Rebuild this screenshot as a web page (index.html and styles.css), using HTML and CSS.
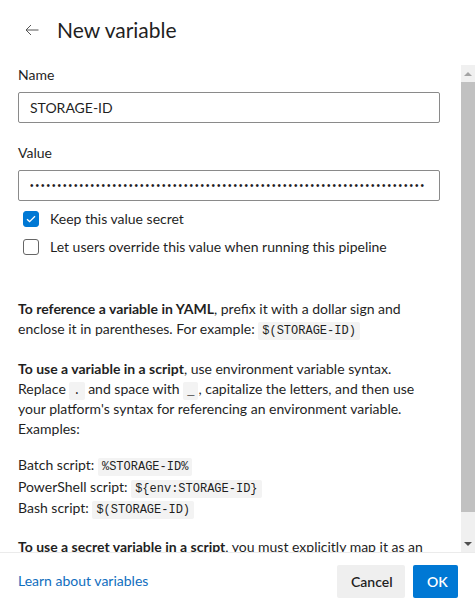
FILE: index.html
```html
<!DOCTYPE html>
<html lang="en">
<head>
<meta charset="utf-8">
<title>New variable</title>
<link rel="stylesheet" href="styles.css">
</head>
<body>
<div class="panel">
  <header class="header">
    <button class="back" aria-label="Back">
      <svg width="14" height="12" viewBox="0 0 14 12"><path d="M13.5 6H1 M6 1L1 6L6 11" fill="none" stroke="#555" stroke-width="1"/></svg>
    </button>
    <h1 class="title">New variable</h1>
  </header>
  <div class="body">
    <div class="content">
      <label class="label">Name</label>
      <input class="input" type="text" value="STORAGE-ID">
      <label class="label label-value">Value</label>
      <input class="input input-secret" type="text" value="••••••••••••••••••••••••••••••••••••••••••••••••••••••••••••••••••••••••">
      <div class="checks">
        <div class="check-row">
          <span class="box box-on"><svg width="10" height="8" viewBox="0 0 10 8"><path d="M1 4.2L3.6 6.6L9 1.2" fill="none" stroke="#fff" stroke-width="1.3"/></svg></span>
          <span>Keep this value secret</span>
        </div>
        <div class="check-row">
          <span class="box"></span>
          <span>Let users override this value when running this pipeline</span>
        </div>
      </div>
      <p class="para para-first"><b>To reference a variable in YAML</b>, prefix it with a dollar sign and enclose it in parentheses. For example: <code>$(STORAGE-ID)</code></p>
      <p class="para"><b>To use a variable in a script</b>, use environment variable syntax. Replace <code>.</code> and space with <code>_</code>, capitalize the letters, and then use your platform's syntax for referencing an environment variable. Examples:</p>
      <div class="examples">
        <div class="ex">Batch script: <code>%STORAGE-ID%</code></div>
        <div class="ex">PowerShell script: <code>${env:STORAGE-ID}</code></div>
        <div class="ex">Bash script: <code>$(STORAGE-ID)</code></div>
      </div>
      <p class="para para-secret"><b>To use a secret variable in a script</b>, you must explicitly map it as an environment variable, and then reference the environment variable.</p>
    </div>
    <div class="scrollbar">
      <div class="sb-btn"><span class="tri tri-up"></span></div>
      <div class="sb-thumb"></div>
      <div class="sb-track"></div>
      <div class="sb-btn"><span class="tri tri-down"></span></div>
    </div>
  </div>
  <footer class="footer">
    <a class="link" href="#">Learn about variables</a>
    <div class="buttons">
      <button class="btn btn-cancel">Cancel</button>
      <button class="btn btn-ok">OK</button>
    </div>
  </footer>
</div>
</body>
</html>
```
FILE: styles.css
```css
* { box-sizing: border-box; }
html, body { margin: 0; padding: 0; }
body {
  font-family: Lato, "Liberation Sans", sans-serif;
  font-size: 14px;
  line-height: 20px;
  color: #1f1f1f;
  background: #fff;
}
.panel {
  width: 475px;
  height: 609px;
  display: flex;
  flex-direction: column;
}
.header {
  height: 65px;
  flex: none;
  display: flex;
  align-items: center;
  padding: 0 0 5px 16px;
}
.back {
  width: 32px;
  height: 32px;
  border: 0;
  background: none;
  padding: 0;
  display: flex;
  align-items: center;
  justify-content: center;
}
.title {
  margin: 0 0 0 9px;
  font-size: 21px;
  font-weight: 400;
  line-height: 28px;
}
.body {
  flex: 1;
  min-height: 0;
  display: flex;
}
.content {
  flex: 1;
  min-width: 0;
  overflow: hidden;
  padding: 0 21px 0 18px;
}
.label {
  display: block;
  line-height: 20px;
  margin-bottom: 7px;
}
.label-value { margin-top: 20px; }
.input {
  display: block;
  width: 100%;
  height: 31px;
  border: 1px solid #8a8a8a;
  border-radius: 2px;
  padding: 0 11px;
  font-family: inherit;
  font-size: 14px;
  color: #1f1f1f;
  background: #fff;
  outline: none;
}
.input-secret {
  font-family: "Liberation Sans", sans-serif;
  font-size: 10px;
  letter-spacing: 2px;
}
.checks { margin-top: 4px; }
.check-row {
  height: 28px;
  display: flex;
  align-items: center;
  gap: 11px;
  padding-left: 5px;
}
.box {
  width: 16px;
  height: 16px;
  border: 1px solid #666;
  border-radius: 3px;
  flex: none;
  display: flex;
  align-items: center;
  justify-content: center;
}
.box-on {
  background: #0078d4;
  border-color: #0078d4;
}
.para { margin: 20px 0 0; }
.para-first { margin-top: 38px; }
b { font-weight: 700; }
code {
  font-family: "Liberation Mono", monospace;
  font-size: 12px;
  line-height: 14px;
  background: #f3f3f3;
  border-radius: 2px;
  padding: 2px 4px;
}
.examples { margin-top: 15px; }
.ex { line-height: 21.5px; }
.para-secret { margin-top: 18px; }
.scrollbar {
  width: 14px;
  flex: none;
  background: #f0f0f0;
  display: flex;
  flex-direction: column;
}
.sb-btn {
  height: 17px;
  display: flex;
  align-items: center;
  justify-content: center;
}
.sb-thumb {
  height: 430px;
  background: #c1c1c1;
}
.sb-track { flex: 1; }
.tri {
  width: 0;
  height: 0;
  border-left: 4px solid transparent;
  border-right: 4px solid transparent;
}
.tri-up { border-bottom: 4px solid #a3a3a3; }
.tri-down { border-top: 4px solid #505050; }
.footer {
  height: 57px;
  flex: none;
  border-top: 1px solid #ebebeb;
  display: flex;
  align-items: center;
  justify-content: space-between;
  padding: 0 17px 0 18px;
}
.link {
  color: #106ebe;
  text-decoration: none;
}
.buttons {
  display: flex;
  gap: 8px;
}
.btn {
  height: 33px;
  border: 0;
  border-radius: 2px;
  font-family: inherit;
  font-size: 14px;
  font-weight: 600;
  padding: 0 14px;
}
.btn-cancel {
  background: #efefef;
  color: #1f1f1f;
  width: 68px;
}
.btn-ok {
  background: #0078d4;
  color: #fff;
  width: 45px;
}
```
